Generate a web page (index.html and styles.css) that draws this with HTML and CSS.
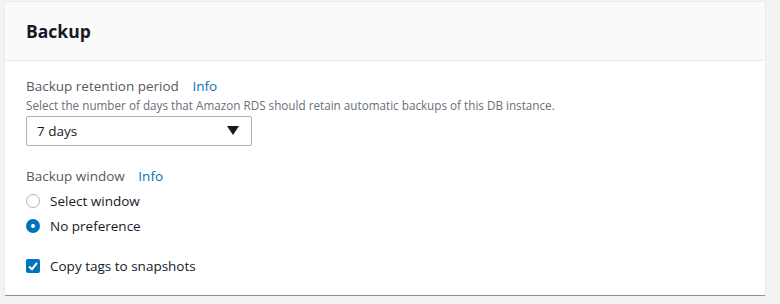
FILE: index.html
```html
<!DOCTYPE html>
<html>
  <head>
    <title>Backup</title>
    <meta name="viewport" content="width=device-width, initial-scale=1.0" />
    <link rel="stylesheet" href="styles.css">
  </head>
  <body>
    <div class="card">
      <div class="card-header">
        <h2>Backup</h2>
      </div>
      <div class="card-body">
        <div class="field">
          <div class="label">Backup retention period <a class="info" href="#">Info</a></div>
          <div class="description">Select the number of days that Amazon RDS should retain automatic backups of this DB instance.</div>
          <div class="select">
            <span>7 days</span>
            <svg class="caret" width="12" height="10" viewBox="0 0 12 10"><polygon points="0,0 12,0 6,9" fill="#16191f"/></svg>
          </div>
        </div>
        <div class="field">
          <div class="label">Backup window <a class="info" href="#">Info</a></div>
          <div class="radio-list">
            <div class="radio-row">
              <span class="radio"></span>
              <span>Select window</span>
            </div>
            <div class="radio-row">
              <span class="radio checked"></span>
              <span>No preference</span>
            </div>
          </div>
        </div>
        <div class="check-row">
          <span class="checkbox">
            <svg width="14" height="14" viewBox="0 0 14 14"><polyline points="3,7.5 6,10.2 11,3.8" fill="none" stroke="#fff" stroke-width="2"/></svg>
          </span>
          <span>Copy tags to snapshots</span>
        </div>
      </div>
    </div>
  </body>
</html>
```

FILE: styles.css
```css
body {
  margin: 0;
  background: #f2f3f3;
  font-family: "Open Sans", "Noto Sans", sans-serif;
  font-size: 13.5px;
  color: #16191f;
}
.card {
  margin: 2px 15px 0 5px;
  background: #fff;
  border-bottom: 1px solid #879596;
  box-shadow: 1px 0 0 #eaeded, -1px 0 0 #eaeded, 0 -1px 0 #eaeded;
}
.card-header {
  background: #fafafa;
  border-bottom: 1px solid #eaeded;
  padding: 18px 20px 0 21px;
  height: 40px;
}
h2 {
  margin: 0;
  font-size: 17.5px;
  line-height: 22px;
  font-weight: 700;
}
.card-body {
  padding: 14px 20px 18px 21px;
}
.field {
  margin-bottom: 19px;
}
.label {
  color: #545b64;
  line-height: 22px;
}
.info {
  color: #0073bb;
  text-decoration: none;
  margin-left: 10px;
}
.description {
  color: #687078;
  font-size: 11.7px;
  line-height: 16px;
}
.select {
  box-sizing: border-box;
  margin-top: 3px;
  width: 226px;
  height: 30px;
  border: 1px solid #aab7b8;
  border-radius: 2px;
  display: flex;
  align-items: center;
  justify-content: space-between;
  padding: 0 12px 0 10px;
}
.radio-list {
  padding-top: 1px;
}
.radio-row {
  display: flex;
  align-items: center;
  height: 25px;
  gap: 10px;
}
.radio {
  width: 12px;
  height: 12px;
  border: 1px solid #aab7b8;
  border-radius: 50%;
  box-sizing: content-box;
}
.radio.checked {
  width: 4px;
  height: 4px;
  border: 5px solid #0073bb;
  background: #fff;
}
.check-row {
  display: flex;
  align-items: center;
  gap: 10px;
  height: 22px;
  margin-top: -2px;
}
.checkbox {
  width: 14px;
  height: 14px;
  background: #0073bb;
  border-radius: 2px;
  display: flex;
}
```
